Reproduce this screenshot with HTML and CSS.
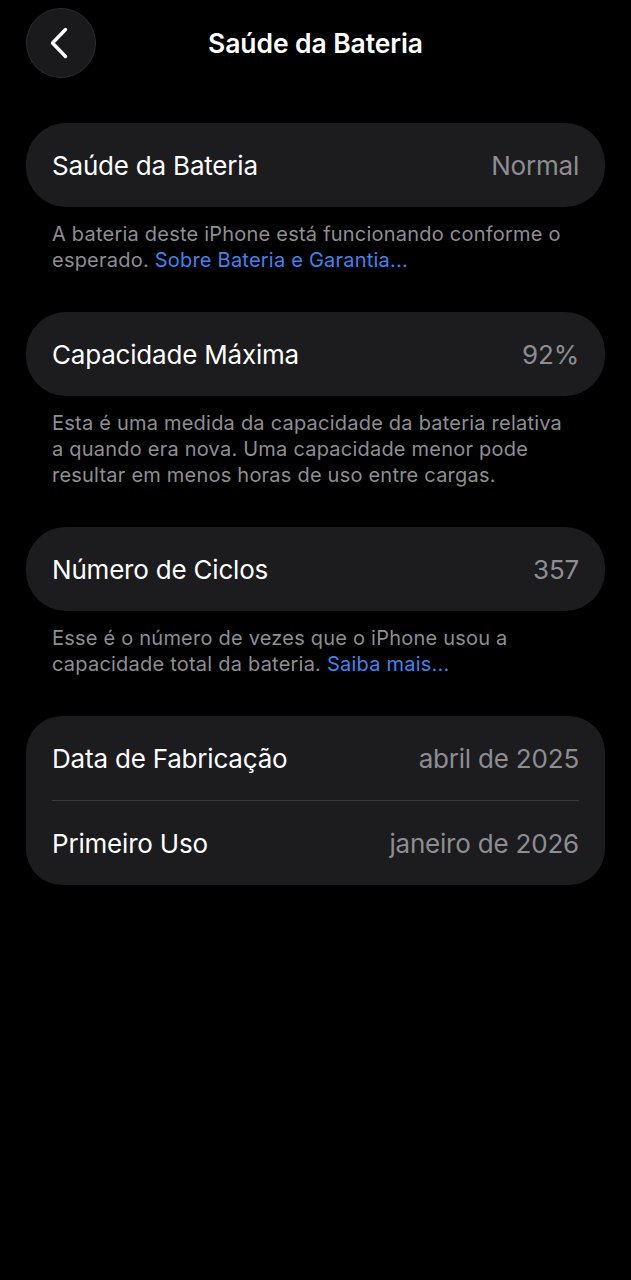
FILE: index.html
```html
<!DOCTYPE html>
<html lang="pt-BR">
<head>
<meta charset="utf-8">
<title>Saúde da Bateria</title>
<link rel="stylesheet" href="styles.css">
</head>
<body>
<div class="screen">
  <header class="nav">
    <button class="back" aria-label="Voltar">
      <svg width="24" height="34" viewBox="0 0 24 34"><path d="M18.5 3.5 L5.5 17 L18.5 30.5" fill="none" stroke="#fff" stroke-width="3.4" stroke-linecap="round" stroke-linejoin="round"/></svg>
    </button>
    <h1 class="title">Saúde da Bateria</h1>
  </header>

  <section class="group">
    <div class="card">
      <div class="row"><span class="label">Saúde da Bateria</span><span class="value">Normal</span></div>
    </div>
    <p class="footer">A bateria deste iPhone está funcionando conforme o esperado. <span class="link">Sobre Bateria e Garantia...</span></p>
  </section>

  <section class="group">
    <div class="card">
      <div class="row"><span class="label">Capacidade Máxima</span><span class="value">92%</span></div>
    </div>
    <p class="footer">Esta é uma medida da capacidade da bateria relativa a quando era nova. Uma capacidade menor pode resultar em menos horas de uso entre cargas.</p>
  </section>

  <section class="group">
    <div class="card">
      <div class="row"><span class="label">Número de Ciclos</span><span class="value">357</span></div>
    </div>
    <p class="footer">Esse é o número de vezes que o iPhone usou a capacidade total da bateria. <span class="link">Saiba mais...</span></p>
  </section>

  <section class="group">
    <div class="card multi">
      <div class="row"><span class="label">Data de Fabricação</span><span class="value">abril de 2025</span></div>
      <div class="sep"></div>
      <div class="row"><span class="label">Primeiro Uso</span><span class="value">janeiro de 2026</span></div>
    </div>
  </section>
</div>
</body>
</html>
```
FILE: styles.css
```css
html, body {
  margin: 0;
  padding: 0;
  background: #000;
}
body {
  font-family: Inter, "Noto Sans", Roboto, sans-serif;
  color: #fff;
  width: 631px;
  min-height: 1280px;
}
.screen {
  padding: 0 26px;
}
.nav {
  height: 123px;
  position: relative;
  display: flex;
  align-items: flex-start;
  justify-content: center;
}
.back {
  position: absolute;
  left: 0;
  top: 8px;
  width: 70px;
  height: 70px;
  border-radius: 50%;
  background: #1a1a1c;
  border: 1px solid #2c2c2e;
  display: flex;
  align-items: center;
  justify-content: center;
  padding: 0 4px 0 0;
  box-sizing: border-box;
}
.title {
  margin: 0;
  margin-top: 26px;
  font-size: 26.5px;
  font-weight: 600;
  line-height: 34px;
  letter-spacing: -0.1px;
}
.group {
  margin-bottom: 39px;
}
.card {
  background: #1c1c1e;
  border-radius: 40px;
  padding: 0 26px;
}
.card.multi {
  border-radius: 36px;
}
.row {
  height: 84px;
  display: flex;
  align-items: center;
  justify-content: space-between;
  font-size: 26px;
  letter-spacing: -0.2px;
}
.label {
  color: #fff;
}
.value {
  color: #8d8d92;
}
.sep {
  height: 1px;
  background: #38383a;
}
.footer {
  margin: 0;
  padding: 14px 26px 0 26px;
  font-size: 20px;
  line-height: 26px;
  color: #8e8e93;
  letter-spacing: 0.22px;
}
.link {
  color: #3f84ee;
}
```
